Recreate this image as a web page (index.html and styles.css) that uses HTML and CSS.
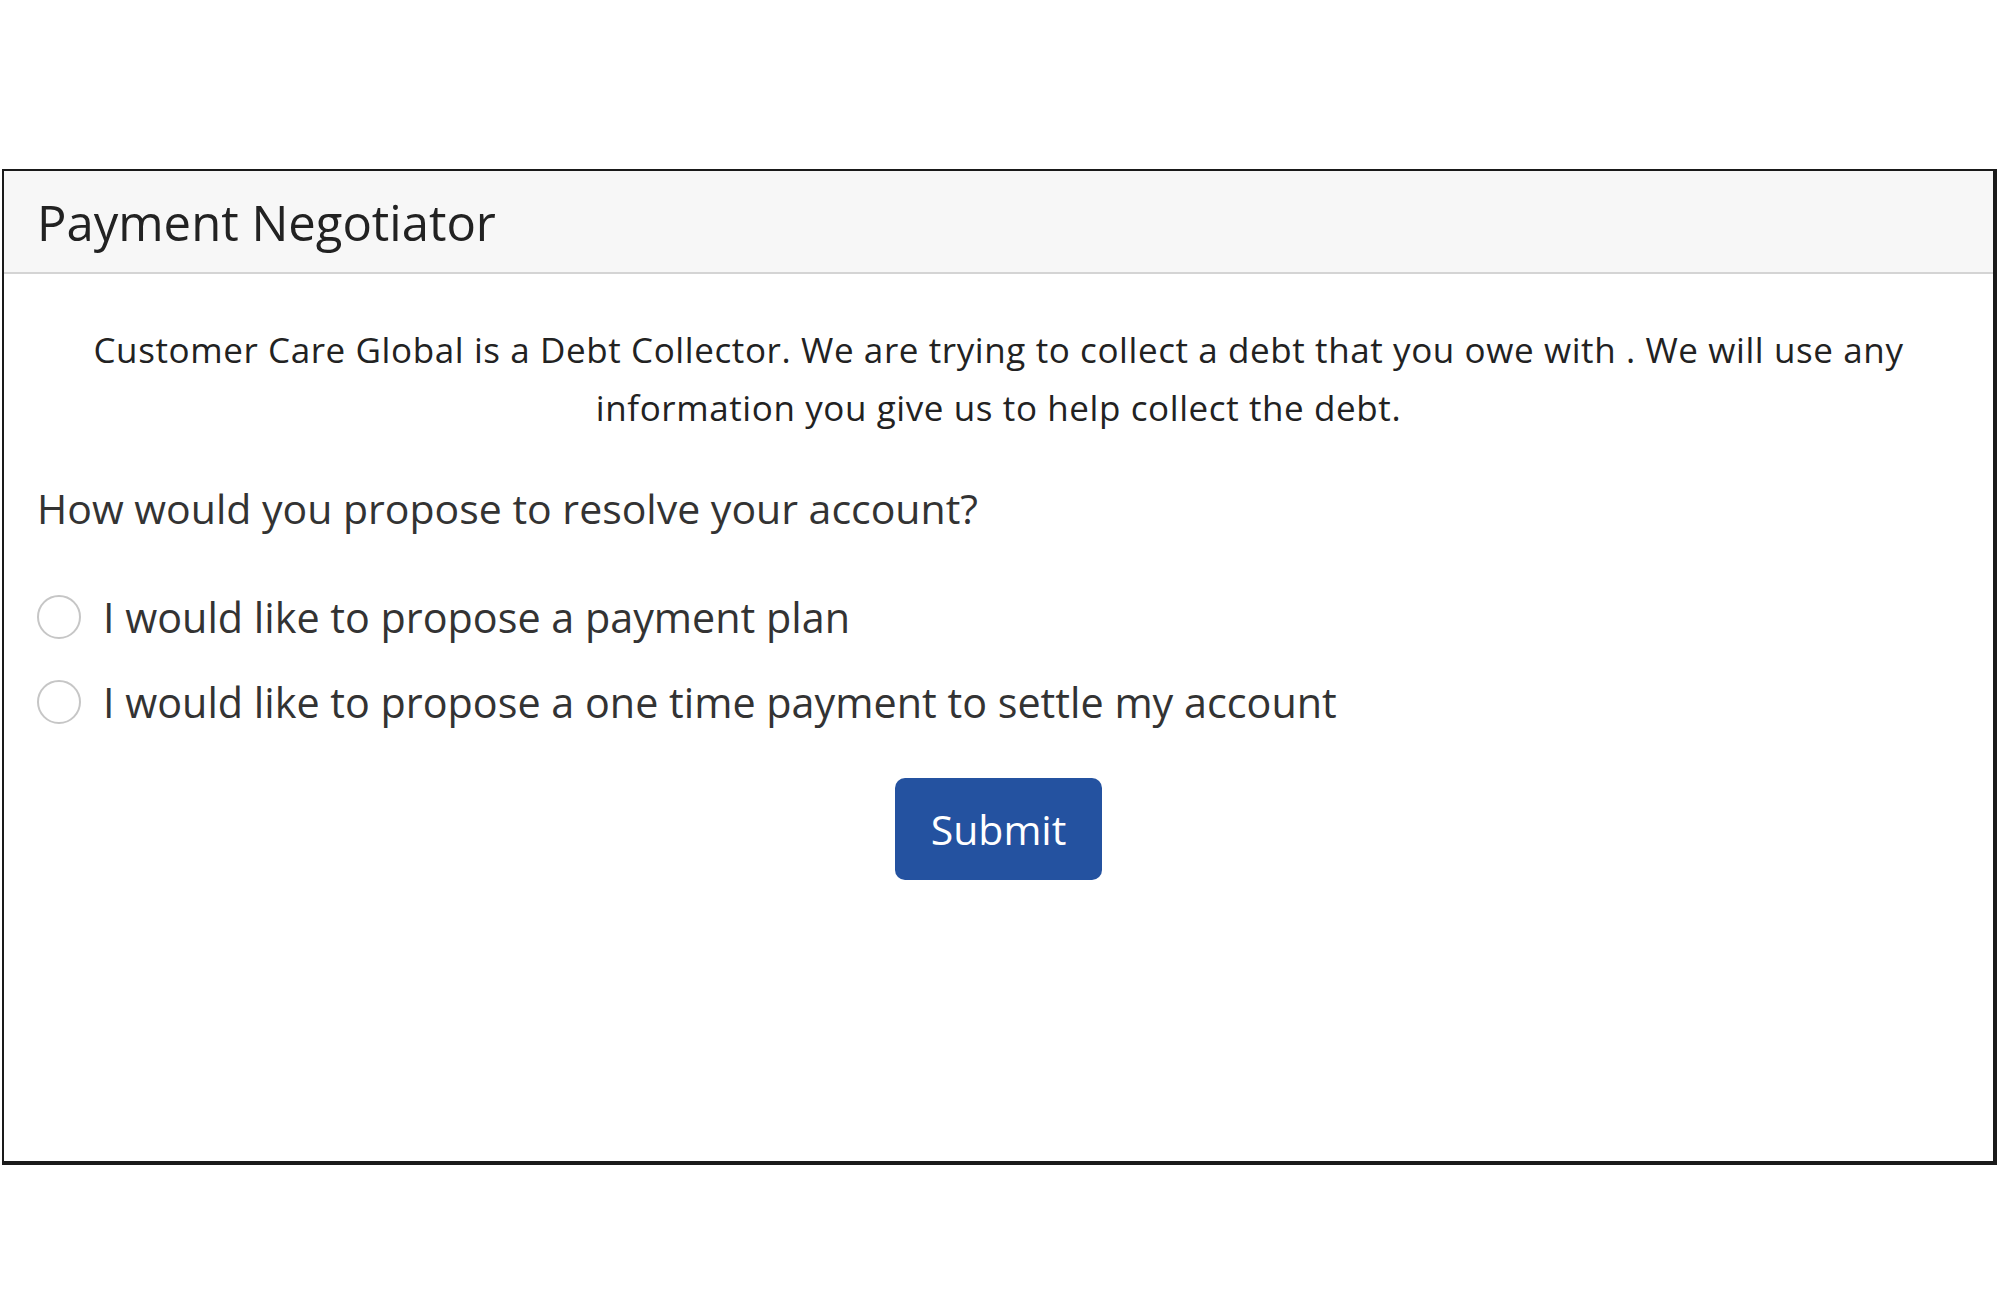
FILE: index.html
```html
<!DOCTYPE html>
<html>
<head>
    <title>Payment Negotiator</title>
    <link rel="stylesheet" href="styles.css">
</head>
<body>
    <div class="page">
        <div class="card">
            <div class="card-header">Payment Negotiator</div>
            <form class="card-body" id="negotiator">
                <p class="notice">Customer Care Global is a Debt Collector. We are trying to collect a debt that you owe with . We will use any information you give us to help collect the debt.</p>

                <p class="question">How would you propose to resolve your account?</p>

                <label class="option">
                    <input type="radio" name="resolution" value="plan">
                    <span>I would like to propose a payment plan</span>
                </label>
                <label class="option">
                    <input type="radio" name="resolution" value="settle">
                    <span>I would like to propose a one time payment to settle my account</span>
                </label>

                <div class="actions">
                    <button type="submit" class="btn">Submit</button>
                </div>
            </form>
        </div>
    </div>
</body>
</html>
```

FILE: styles.css
```css
body { margin: 0; background: #fff; font-family: "Open Sans", "Noto Sans", sans-serif; color: #212529; }
.page { padding: 169px 3px 0 2px; }
.card { height: 996px; border-style: solid; border-color: #1a1a1a; border-width: 2px 4px 4px 2px; box-sizing: border-box; display: flex; flex-direction: column; }
.card-header { background: #f7f7f7; border-bottom: 2px solid #d4d4d4; height: 103px; box-sizing: border-box; padding: 0 33px; display: flex; align-items: center; font-size: 49px; color: #222; }
.card-body { padding: 47px 33px 0 33px; display: flex; flex-direction: column; }
.notice { margin: 0; text-align: center; font-size: 35px; line-height: 58px; color: #222; letter-spacing: 0.6px; }
.question { margin: 41px 0 0 0; font-size: 41px; line-height: 61px; color: #333; }
.option { display: flex; align-items: center; gap: 22px; margin-top: 46px; font-size: 41.3px; line-height: 64px; color: #333; }
.option + .option { margin-top: 21px; }
.option input { appearance: none; -webkit-appearance: none; margin: 0; width: 44px; height: 44px; border: 2px solid #c6c6c6; border-radius: 50%; background: #fff; flex-shrink: 0; }
.option input:checked { border: 12px solid #2452a0; }
.actions { display: flex; justify-content: center; margin-top: 44px; }
.btn { background: #2452a0; color: #fff; border: none; border-radius: 10px; font-family: "Open Sans", "Noto Sans", sans-serif; font-size: 41px; line-height: 52px; padding: 25px 36px; cursor: pointer; }
```
